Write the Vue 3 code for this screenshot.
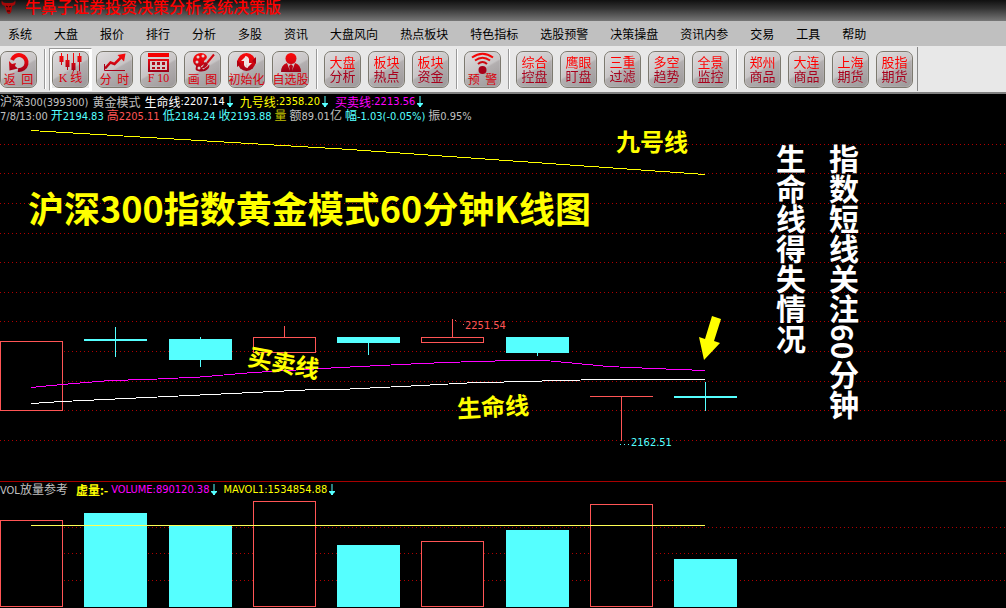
<script setup>
const menus = ['系统', '大盘', '报价', '排行', '分析', '多股', '资讯', '大盘风向', '热点板块', '特色指标', '选股预警', '决策操盘', '资讯内参', '交易', '工具', '帮助']

const tools = [
  [{ icon: 'back', label: '返  回' }],
  [
    { icon: 'candles', label: 'K 线', pressed: true, serif: true },
    { icon: 'trend', label: '分  时' },
    { icon: 'calendar', label: 'F 10', serif: true },
    { icon: 'palette', label: '画  图' },
    { icon: 'reset', label: '初始化' },
    { icon: 'person', label: '自选股' }
  ],
  [{ lines: '大盘\n分析' }, { lines: '板块\n热点' }, { lines: '板块\n资金' }],
  [{ icon: 'signal', label: '预  警' }],
  [{ lines: '综合\n控盘' }, { lines: '鹰眼\n盯盘' }, { lines: '三重\n过滤' }, { lines: '多空\n趋势' }, { lines: '全景\n监控' }],
  [{ lines: '郑州\n商品' }, { lines: '大连\n商品' }, { lines: '上海\n期货' }, { lines: '股指\n期货' }]
]

const indicators = [
  { name: '生命线', value: ':2207.14', tone: 'white' },
  { name: '九号线', value: ':2358.20', tone: 'yellow' },
  { name: '买卖线', value: ':2213.56', tone: 'magenta' }
]

const quotes = [
  { name: '开', value: '2194.83', tone: 'cyan' },
  { name: '高', value: '2205.11', tone: 'red' },
  { name: '低', value: '2184.24', tone: 'cyan' },
  { name: '收', value: '2193.88', tone: 'cyan' },
  { name: '量', value: '', tone: 'olive' },
  { name: '额', value: '89.01', unit: '亿', tone: 'gray' },
  { name: '幅', value: '-1.03(-0.05%)', tone: 'cyan' },
  { name: '振', value: '0.95%', tone: 'gray' }
]

const priceGrid = [144, 173, 203, 233, 262, 292, 321, 351, 381, 410, 440]
const volumeGrid = [527, 553, 580]

const candles = [
  { x: 0, top: 341, bottom: 411, up: true, vol: 520 },
  { x: 84, top: 339, bottom: 341, high: 327, low: 357, vol: 513 },
  { x: 169, top: 339, bottom: 360, high: 337, low: 367, vol: 525 },
  { x: 253, top: 337, bottom: 353, high: 326, up: true, vol: 501 },
  { x: 337, top: 337, bottom: 343, low: 355, vol: 545 },
  { x: 421, top: 337, bottom: 343, high: 319, up: true, vol: 541 },
  { x: 506, top: 337, bottom: 353, low: 356, vol: 530 },
  { x: 590, top: 396, bottom: 397, low: 441, up: true, vol: 504 },
  { x: 674, top: 396, bottom: 398, high: 382, low: 411, vol: 559 }
]
</script>

<template>
  <div class="app">
    <header class="title">
      <svg class="logo" width="18" height="14" viewBox="0 0 18 14" aria-hidden="true">
        <path d="M2 0Q0 5 5 6Q6 13 9 14Q12 13 12 6Q17 5 15 0Q15 3 11 3H6Q2 3 2 0Z" fill="#a40808" />
        <path d="M6 6l2 1M11 6l-2 1M7 11h3" stroke="#200" />
      </svg>
      <h1>牛鼻子证券投资决策分析系统决策版</h1>
    </header>

    <nav class="menu">
      <button v-for="m in menus" :key="m" type="button">{{ m }}</button>
    </nav>

    <div class="toolbar">
      <div class="tools">
        <template v-for="(group, gi) in tools" :key="gi">
          <span v-if="gi" class="sep"></span>
          <button v-for="(t, ti) in group" :key="ti" type="button" class="tool" :class="{ pressed: t.pressed, serif: t.serif }">
            <svg v-if="t.icon" width="35" height="20" viewBox="1 1 35 20" fill="none" aria-hidden="true">
              <defs>
                <linearGradient :id="'red-' + t.icon" gradientUnits="userSpaceOnUse" x1="0" y1="2" x2="0" y2="21">
                  <stop offset="0" stop-color="#ff0808" />
                  <stop offset="0.4" stop-color="#e00810" />
                  <stop offset="1" stop-color="#980018" />
                </linearGradient>
              </defs>
              <g v-if="t.icon === 'back'">
                <path d="M18 19A7.500 7.500 0 1 0 12 9" stroke="url(#red-back)" stroke-width="4" />
                <path d="M9 10L9.500 19.500L18 17.500L15 15L16 12L12 13Z" fill="url(#red-back)" />
              </g>
              <g v-else-if="t.icon === 'candles'" fill="url(#red-candles)">
                <path d="M9 2h1v12h-1zM15 3h1v16h-1zM21 2h1v18h-1zM27 2h1v18h-1z" />
                <path d="M7.500 5h4v6h-4zM13.500 9h4v7h-4zM19.500 12h4v7h-4zM25.500 5h4v6h-4z" />
              </g>
              <g v-else-if="t.icon === 'trend'">
                <path d="M9 17.500L14.500 11.500L18.500 13L25 6.500" stroke="url(#red-trend)" stroke-width="2.500" />
                <path d="M29.500 2.500L21.500 4L28 10.500Z" fill="url(#red-trend)" />
                <path d="M8.500 13V19.500H29" stroke="#a80018" stroke-width="1" />
              </g>
              <g v-else-if="t.icon === 'calendar'">
                <path d="M8 2h21v4h-21z" fill="#f50000" />
                <path d="M8 8h21v13h-21z" fill="url(#red-calendar)" />
                <path d="M10 10h17v9h-17z" fill="#d8c8c8" />
                <path d="M12 11h3v3h-3zM17 11h3v3h-3zM22 11h3v3h-3zM12 16h3v2h-3zM17 16h3v2h-3zM22 16h3v2h-3z" fill="#b00818" />
              </g>
              <g v-else-if="t.icon === 'palette'">
                <path d="M17 2C9 2 7 11 11 14C14 15 9 19 14 20C20 22 27 18 25 13C24 11 21 13 20 11C19 9 25 8 22 4Q20 2 17 2Z" fill="url(#red-palette)" />
                <g fill="#ddd2d2"><circle cx="14" cy="6" r="1.500" /><circle cx="19" cy="5" r="1.500" /><circle cx="13" cy="11" r="1.500" /><circle cx="15" cy="17" r="1.500" /></g>
                <path d="M30 4L22 14L18 17" stroke="#d8c8c8" stroke-width="4" />
                <path d="M30 3.500L23 12" stroke="#d00810" stroke-width="2" />
                <path d="M22 11L24 13Q22 18 17 17Q20 15 20 12Z" fill="#b00818" />
              </g>
              <g v-else-if="t.icon === 'reset'">
                <ellipse cx="18.500" cy="11" rx="9" ry="9" fill="url(#red-reset)" />
                <path d="M9 9V16L13 13M28 6V13L24 10" fill="#b00010" />
                <path d="M18 5L13 10H16V14Q17 17 20 17Q18 15 19 12Z" fill="#f0e4e4" />
                <path d="M19 17L24 12H21V8Q20 5 17 5Q19 7 18 10Z" fill="#f0e4e4" />
              </g>
              <g v-else-if="t.icon === 'person'" fill="url(#red-person)">
                <circle cx="19" cy="7.500" r="5.500" />
                <path d="M9 21Q9 14 15 12L18 20L17 15L19 13L21 15L20 20L23 12Q29 14 29 21Z" />
              </g>
              <g v-else>
                <circle cx="18.500" cy="19" r="4" fill="#a80018" />
                <path d="M8 6.500Q18.500 -1 29 6.500" stroke="#f50404" stroke-width="2" />
                <path d="M11 9.500Q18.500 4 26 9.500" stroke="#e80808" stroke-width="2" />
                <path d="M14 13Q18.500 9 23 13" stroke="#cc0810" stroke-width="2" />
              </g>
            </svg>
            <span v-if="t.icon" class="label">{{ t.label }}</span>
            <span v-else class="lines">{{ t.lines }}</span>
          </button>
        </template>
      </div>
    </div>

    <main class="charts">
      <section class="info">
        <div class="row first">
          <span class="gray">沪深<b>300(399300)</b></span>
          <span class="gray">黄金模式</span>
          <span v-for="i in indicators" :key="i.name" class="ind" :class="i.tone">
            {{ i.name }}<b>{{ i.value }}</b>
            <svg class="down" width="6" height="12" viewBox="0 0 6 12" aria-hidden="true"><path d="M2.500 0h1v7h2.500v1l-2 2v1h-2v-1l-2-2v-1h2.500z" /></svg>
          </span>
        </div>
        <div class="row">
          <span class="gray"><b>7/8/13:00</b></span>
          <span v-for="q in quotes" :key="q.name" :class="q.tone">{{ q.name }}<b>{{ q.value }}</b>{{ q.unit }}</span>
        </div>
      </section>

      <section class="price">
        <svg width="100%" height="357" shape-rendering="crispEdges">
          <g transform="translate(0 -124)" fill="none">
            <line v-for="y in priceGrid" :key="y" class="grid" x1="0" x2="100%" :y1="y + 0.5" :y2="y + 0.5" />
            <g v-for="c in candles" :key="c.x" :class="c.up ? 'up' : 'dn'">
              <rect v-if="c.high" class="wick" :x="c.x + 31" :y="c.high" width="1" :height="c.top - c.high" />
              <rect v-if="c.low" class="wick" :x="c.x + 31" :y="c.bottom" width="1" :height="c.low - c.bottom" />
              <rect v-if="c.up" class="body" :x="c.x + 0.5" :y="c.top + 0.5" width="62" :height="c.bottom - c.top - 1" />
              <rect v-if="!c.up || c.bottom - c.top === 1" class="wick" :x="c.x" :y="c.top" width="63" :height="c.bottom - c.top" />
            </g>
            <path stroke="#ffff00" d="M31 130.500L350 149.500L705 174.500" />
            <path stroke="#ff00ff" d="M31 387.500L62 384.500L110 380.500L147 379.500L200 377L253 372.500L340 367.500L421 363.500L474 361.500L516 360.500L545 360.500L572 363L608 366.500L653 368.500L705 370.500" />
            <path stroke="#ffffff" d="M31 403.500L62 401.500L147 397.500L200 395L253 392.500L305 390L340 389.500L421 385.500L467 383L523 381.500L600 379.500H705" />
            <path stroke="#ff5555" stroke-dasharray="1 2" d="M455 320.500L464 324.500" />
            <path stroke="#55ffff" stroke-dasharray="1 3" d="M620 444.500H630" />
            <polygon shape-rendering="auto" fill="#ffff00" points="712,316 721,319 714,341 720,343 704,360 699,337 705,339" />
          </g>
        </svg>
        <span class="tag red high">2251.54</span>
        <span class="tag cyan low">2162.51</span>
        <h2 class="note headline">沪深300指数黄金模式60分钟K线图</h2>
        <span class="note nine">九号线</span>
        <span class="note trade">买卖线</span>
        <span class="note life">生命线</span>
        <p class="note side">指数短线关注60分钟<br />生命线得失情况</p>
      </section>

      <section class="volume">
        <div class="row vol">
          <span class="gray vname"><b>VOL</b>放量参考</span>
          <span class="yellow strong">虚量:-</span>
          <span class="magenta ind"><b>VOLUME:890120.38</b><svg class="down" width="6" height="12" viewBox="0 0 6 12" aria-hidden="true"><path d="M2.500 0h1v7h2.500v1l-2 2v1h-2v-1l-2-2v-1h2.500z" /></svg></span>
          <span class="yellow ind"><b>MAVOL1:1534854.88</b><svg class="down" width="6" height="12" viewBox="0 0 6 12" aria-hidden="true"><path d="M2.500 0h1v7h2.500v1l-2 2v1h-2v-1l-2-2v-1h2.500z" /></svg></span>
        </div>
        <svg width="100%" height="111" shape-rendering="crispEdges">
          <g transform="translate(0 -497)" fill="none">
            <line v-for="y in volumeGrid" :key="y" class="grid" x1="0" x2="100%" :y1="y + 0.5" :y2="y + 0.5" />
            <g v-for="c in candles" :key="c.x" :class="c.up ? 'up' : 'dn'">
              <rect v-if="c.up" class="body" :x="c.x + 0.5" :y="c.vol + 0.5" width="62" :height="606 - c.vol" />
              <rect v-else class="wick" :x="c.x" :y="c.vol" width="63" :height="607 - c.vol" />
            </g>
            <path stroke="#ffff55" d="M31 525.500H705" />
          </g>
        </svg>
      </section>
    </main>
  </div>
</template>

<style>
body {
  background: #000;
}
</style>

<style scoped>
.app {
  font: 12px/14px "Noto Sans CJK SC", sans-serif;
  color: #c0c0c0;
  background: #000;
  overflow: hidden;
}
svg {
  display: block;
}
.title {
  display: flex;
  gap: 7px;
  height: 21px;
  overflow: hidden;
  background: linear-gradient(#101010, #333 40%, #777);
}
h1 {
  margin: 0;
  font-size: 16px;
  line-height: 12px;
  font-weight: 500;
  color: #f00;
  white-space: nowrap;
}
.menu {
  display: flex;
  align-items: center;
  gap: 22px;
  height: 25px;
  padding-left: 8px;
  background: #c0c0c0;
}
button {
  font: inherit;
  padding: 0;
  border: 0;
  background: none;
  color: #000;
  white-space: nowrap;
}
.toolbar {
  display: flex;
  height: 46px;
  background: #e8e8e8;
  border-bottom: 2px solid #808080;
}
.tools {
  display: flex;
  align-items: center;
  gap: 7px;
  padding-right: 4px;
  margin: 1px 0;
  border-right: 1px solid #888;
}
.sep {
  width: 1px;
  height: 40px;
  background: #999;
  box-shadow: 1px 0 #fff;
}
.tool {
  position: relative;
  display: flex;
  flex-direction: column;
  align-items: center;
  width: 37px;
  height: 37px;
  border: 1px solid #7c796f;
  border-radius: 7px;
  background: linear-gradient(150deg, #dedcdd 0%, #c8c5c6 48%, #b3afb0 52%, #9b9798 100%);
  box-shadow: inset 0 0 1px #fff;
}
.tool svg {
  overflow: visible;
}
.pressed::before {
  content: "";
  position: absolute;
  inset: -4px;
  border: 1px solid #999;
  border-right-color: #fff;
  border-bottom-color: #fff;
  box-shadow: inset 0 0 0 2px #fff;
}
.label {
  position: relative;
  line-height: 13px;
  white-space: pre;
  color: #d8000c;
}
.serif .label {
  font-family: "Liberation Serif", "Noto Sans CJK SC", serif;
}
.lines {
  margin-top: 3px;
  font-size: 13px;
  line-height: 14px;
  white-space: pre-line;
  color: transparent;
  background: linear-gradient(#f00 50%, #a8001c 50%);
  background-clip: text;
}
.info {
  height: 30px;
  padding-top: 1px;
  box-sizing: border-box;
}
.row {
  display: flex;
  align-items: center;
  gap: 3px;
  height: 14px;
  white-space: nowrap;
}
.row.first {
  gap: 4px;
}
.row b {
  font: 11px/14px "DejaVu Sans Condensed", "DejaVu Sans", sans-serif;
}
.ind {
  display: flex;
  align-items: center;
  margin-right: 3px;
}
.down {
  margin-left: 2px;
  fill: #55ffff;
}
.white { color: #fff; }
.yellow { color: #ff0; }
.magenta { color: #f0f; }
.cyan { color: #55ffff; }
.red { color: #ff5555; }
.olive { color: #c0c000; }
.gray { color: #c0c0c0; }
.grid {
  stroke: #b00000;
  stroke-dasharray: 1 3;
}
.up .wick { fill: #ff5555; }
.up .body {
  fill: #000;
  stroke: #ff5555;
}
.dn .wick { fill: #55ffff; }
.price {
  position: relative;
}
.tag {
  position: absolute;
  font: 11px/14px "DejaVu Sans Condensed", "DejaVu Sans", sans-serif;
}
.tag.high {
  left: 465px;
  top: 195px;
}
.tag.low {
  left: 631px;
  top: 312px;
}
.note {
  position: absolute;
  margin: 0;
  font-weight: 700;
  font-size: 24px;
  line-height: 24px;
  color: #ff0;
  white-space: nowrap;
}
.headline {
  left: 28px;
  top: 65px;
  font-size: 36px;
  line-height: 36px;
}
.nine {
  left: 616px;
  top: 5px;
}
.trade {
  left: 248px;
  top: 226px;
  transform: rotate(11deg);
}
.life {
  left: 457px;
  top: 270px;
  transform: rotate(-3deg);
}
.side {
  left: 764px;
  top: 20px;
  writing-mode: vertical-rl;
  font-size: 30px;
  line-height: 53px;
  color: #fff;
}
.volume {
  border-top: 1px solid #a80000;
}
.row.vol {
  height: 15px;
}
.vname {
  margin-right: 5px;
}
.strong {
  font-weight: 700;
}
</style>
